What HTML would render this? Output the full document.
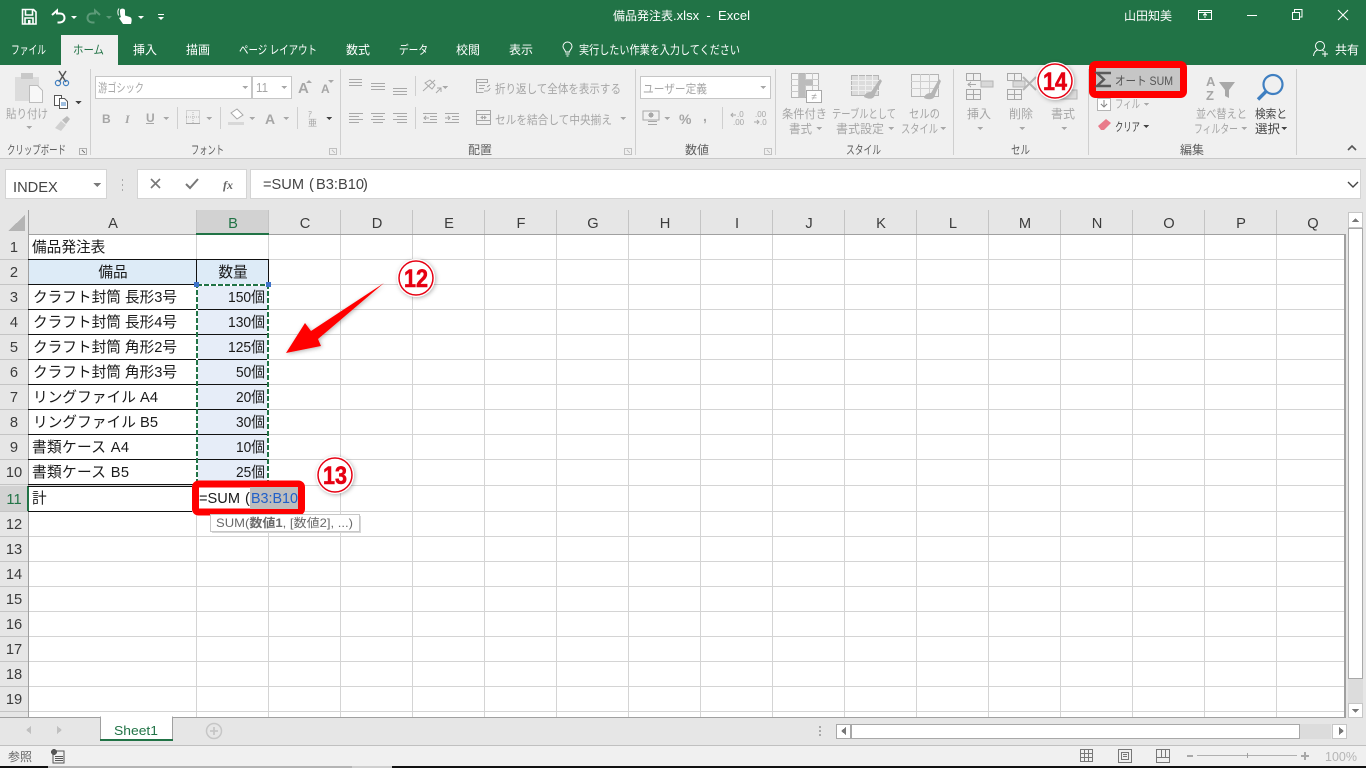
<!DOCTYPE html>
<html lang="ja"><head><meta charset="utf-8"><title>備品発注表.xlsx - Excel</title>
<style>
html,body{margin:0;padding:0;background:#f0f0f0;overflow:hidden;width:1366px;height:768px}
svg{display:block}
text{font-family:"Liberation Sans","Noto Sans CJK JP",sans-serif;font-size:12px;white-space:pre}
.w{fill:#fff}.d{fill:#a6a6a6}.l{fill:#5e5e5e}.k{fill:#444}
.c{font-size:14.67px;fill:#1a1a1a}
.h{font-size:14.67px;fill:#3c3c3c;text-anchor:middle}
.r{text-anchor:end}
.m{text-anchor:middle}
.ic{fill:none;stroke:#a8a8a8;stroke-width:1}
.ar{fill:#a8a8a8}
.num{font-size:25px;font-weight:bold;fill:#e60012;stroke:#e60012;stroke-width:.6;text-anchor:middle}
</style></head><body>
<svg width="1366" height="768" viewBox="0 0 1366 768" xmlns="http://www.w3.org/2000/svg" shape-rendering="crispEdges">
<defs><filter id="sh" x="-30%" y="-30%" width="160%" height="160%"><feDropShadow dx="1" dy="1" stdDeviation="2" flood-color="#000" flood-opacity=".3"/></filter></defs>

<!-- backgrounds -->
<rect width="1366" height="768" fill="#e6e6e6"/>
<rect width="1366" height="65" fill="#217346"/>
<rect x="61" y="35" width="57" height="30" fill="#f0f0f0"/>
<rect y="65" width="1366" height="93" fill="#f0f0f0"/>
<rect y="158" width="1366" height="1" fill="#c8c8c8"/>

<!-- quick access -->
<g shape-rendering="auto">
<path d="M22.500 9.500h11l2.500 2.500v12h-13.500z M25.500 10v5h7v-5 M25 24v-6h8v6" fill="none" stroke="#fff" stroke-width="1.600"/>
<rect x="28" y="20" width="2.500" height="3.500" fill="#fff"/>
<path d="M52 15l5-4.500v3h3c3 0 4.500 2 4.500 4.500s-2 4.500-5 4.500h-2" fill="none" stroke="#fff" stroke-width="2"/>
<path d="M71 16h6l-3 3z" fill="#fff"/>
<path d="M100 15l-5-4.500v3h-3c-3 0-4.500 2-4.500 4.500s2 4.500 5 4.500h2" fill="none" stroke="#5c9a78" stroke-width="2"/>
<path d="M106 16h6l-3 3z" fill="#5c9a78"/>
<path d="M120 10.500c0-2.500 5-2.500 5 0v5l5 1.500c2 1 2 3 1 7h-8l-4-6 2-1c-1-2-1-5-1-6.500z" fill="#fff"/>
<path d="M118.500 15.500c-1-3-1-5 .5-7" fill="none" stroke="#fff"/>
<path d="M138 16h6l-3 3z" fill="#fff"/>
<path d="M158 14h6v1h-6z M158 17h6l-3 3z" fill="#fff"/>
</g>

<text x="613" y="20" class="w" textLength="60" lengthAdjust="spacingAndGlyphs">備品発注表</text>
<text x="673" y="20" class="w" textLength="77" lengthAdjust="spacingAndGlyphs" style="font-size:13px">.xlsx  -  Excel</text>
<text x="1124" y="20" class="w" textLength="48" lengthAdjust="spacingAndGlyphs">山田知美</text>

<!-- window controls -->
<path d="M1198.500 10.500h13v9h-13z M1198.500 12.500h13" fill="none" stroke="#fff"/>
<path d="M1205 18v-4 M1203 15.500l2-2 2 2" fill="none" stroke="#fff"/>
<rect x="1247" y="15" width="10" height="1" fill="#fff"/>
<path d="M1292.500 12.500h7v7h-7z M1294.500 12v-2.500h7.500v7.500h-2.500" fill="none" stroke="#fff"/>
<path d="M1338 10l10 10M1348 10l-10 10" stroke="#fff" shape-rendering="auto" fill="none" stroke-width="1.100"/>

<!-- tabs -->
<text x="11" y="54" class="w" textLength="35" lengthAdjust="spacingAndGlyphs">ファイル</text>
<text x="73" y="54" fill="#217346" textLength="31" lengthAdjust="spacingAndGlyphs">ホーム</text>
<text x="133" y="54" class="w" textLength="24" lengthAdjust="spacingAndGlyphs">挿入</text>
<text x="186" y="54" class="w" textLength="24" lengthAdjust="spacingAndGlyphs">描画</text>
<text x="239" y="54" class="w" textLength="78" lengthAdjust="spacingAndGlyphs">ページ レイアウト</text>
<text x="346" y="54" class="w" textLength="24" lengthAdjust="spacingAndGlyphs">数式</text>
<text x="399" y="54" class="w" textLength="29" lengthAdjust="spacingAndGlyphs">データ</text>
<text x="456" y="54" class="w" textLength="24" lengthAdjust="spacingAndGlyphs">校閲</text>
<text x="509" y="54" class="w" textLength="24" lengthAdjust="spacingAndGlyphs">表示</text>
<g shape-rendering="auto" fill="none" stroke="#fff">
<path d="M565.500 52c0-2-2.500-3-2.500-5.500a4.500 4.500 0 0 1 9 0c0 2.500-2.500 3.500-2.500 5.500z M565.500 54h4 M566.500 56h2"/>
<circle cx="1320" cy="46" r="4.500"/><path d="M1313.500 56c.5-4 2.500-5.500 4-6 M1322.500 50.500l1.500.5 M1322 54h6 M1325 51v6"/>
</g>
<text x="579" y="54" class="w" textLength="161" lengthAdjust="spacingAndGlyphs">実行したい作業を入力してください</text>
<text x="1335" y="54" class="w" textLength="24" lengthAdjust="spacingAndGlyphs">共有</text>

<!-- ribbon separators -->
<path d="M90.500 69v86M340.500 69v86M635.500 69v86M775.500 69v86M953.500 69v86M1088.500 69v86M1296.500 69v86M415.500 76v20M415.500 107v22M177.500 107v22M220.500 107v22M297.500 107v22M722.500 107v22" stroke="#cfcfcf" fill="none"/>

<!-- clipboard -->
<rect x="15" y="77" width="24" height="24" fill="#dcdcdc"/><rect x="21" y="73" width="12" height="6" fill="#c8c8c8"/>
<path d="M29.500 85.500h8l5 5v12h-13z" fill="#f8f8f8" stroke="#bdbdbd"/>
<text x="6" y="118" class="d" textLength="42" lengthAdjust="spacingAndGlyphs">貼り付け</text>
<path class="ar" d="M26 126h6l-3 3z"/>
<g shape-rendering="auto" fill="none">
<path d="M59 71l7 11M66 71l-7 11" stroke="#555" stroke-width="1.500"/>
<circle cx="58" cy="83" r="2.600" stroke="#3f7fc1" stroke-width="1.200"/><circle cx="66" cy="83" r="2.600" stroke="#3f7fc1" stroke-width="1.200"/>
<path d="M54.500 95.500h7v10h-7z" fill="#fff" stroke="#555"/><path d="M59.500 98.500h5l3 3v7h-8z" fill="#fff" stroke="#555"/><path d="M61 103h5M61 105h5" stroke="#3f7fc1"/>
<path d="M55 128l6-7 5 4-5 6z" fill="#d0d0d0"/><path d="M62 120l5-4 3 3-4 5z" fill="#bcbcbc"/>
</g>
<path fill="#444" d="M75 101h7l-3.500 3z"/>
<text x="7" y="154" class="l" textLength="59" lengthAdjust="spacingAndGlyphs">クリップボード</text>
<path d="M79.500 148.500h7v6h-7z" fill="none" stroke="#b0b0b0"/><path d="M82 150l3 3" stroke="#777" fill="none"/>

<!-- font -->
<rect x="95.500" y="76.500" width="156" height="22" fill="#fff" stroke="#c6c6c6"/>
<rect x="252.500" y="76.500" width="39" height="22" fill="#fff" stroke="#c6c6c6"/>
<text x="98" y="92" class="d" textLength="46" lengthAdjust="spacingAndGlyphs">游ゴシック</text>
<text x="256" y="92" class="d" textLength="12" lengthAdjust="spacingAndGlyphs" style="font-size:13px">11</text>
<path class="ar" d="M242 86h6l-3 3zM281 86h6l-3 3z"/>
<g shape-rendering="auto">
<text x="298" y="93" class="d" style="font-size:15px;font-weight:bold">A</text><path class="ar" d="M306 83l3-3 3 3z"/>
<text x="321" y="93" class="d" style="font-size:12px;font-weight:bold">A</text><path class="ar" d="M328 80h6l-3 3z"/>
<text x="102" y="123" class="d" style="font-size:12px;font-weight:bold">B</text>
<text x="125" y="123" class="d" style="font-size:12px;font-style:italic;font-family:'Liberation Serif',serif;font-weight:bold">I</text>
<text x="146" y="122" class="d" style="font-size:12px;font-weight:bold">U</text>
<rect x="146" y="123" width="8" height="1" fill="#a6a6a6"/>
<text x="265" y="124" class="d" style="font-size:14px;font-weight:bold">A</text>
<text x="308" y="117" class="d" style="font-size:8px">ｱ</text>
<text x="308" y="126" class="d" style="font-size:9px">亜</text>
</g>
<path class="ar" d="M163 117h6l-3 3zM206 117h6l-3 3zM249 117h6l-3 3zM283 117h6l-3 3z"/>
<path fill="#444" d="M326 117h6l-3 3z"/>
<path d="M186.500 110.500h13v13h-13zM186 117h14M193 110v14" stroke="#b5b5b5" stroke-dasharray="1 1" fill="none"/>
<path d="M186 123.500h14" stroke="#a8a8a8" fill="none"/>
<path d="M231 113l6-4 6 6-6 4z" fill="#fff" stroke="#a8a8a8" shape-rendering="auto"/><rect x="228" y="122" width="16" height="3" fill="#d8d8d8"/>
<text x="191" y="154" class="l" textLength="33" lengthAdjust="spacingAndGlyphs">フォント</text>
<path d="M329.500 148.500h7v6h-7zM332 150l3 3" stroke="#c0c0c0" fill="none"/>

<!-- alignment -->
<path class="ic" d="M349 79.500h13M349 82.500h13M349 85.500h13 M371 83.500h14M371 86.500h14M371 89.500h14 M393 88.500h14M393 91.500h14M393 94.500h14 M349 113.500h14M349 116.500h10M349 119.500h14M349 122.500h10 M371 113.500h14M373 116.500h10M371 119.500h14M373 122.500h10 M393 113.500h14M397 116.500h10M393 119.500h14M397 122.500h10 M423 113.500h14M430 116.500h7M430 119.500h7M423 122.500h14M429 118h-5M426 116l-2 2 2 2 M445 113.500h14M452 116.500h7M452 119.500h7M445 122.500h14M445 118h5M448 116l2 2-2 2"/>
<path d="M423 91l12-11 M425 83l5-3 5 5-3 4z M436 93l5-5 M441 92v-4h-4" fill="none" stroke="#a8a8a8" shape-rendering="auto"/>
<path class="ar" d="M442 86h6l-3 3z"/>
<path class="ic" d="M476.500 79.500h11v3h-11z M476.500 82.500v10h7 M479 85.500h6M479 88.500h5 M487 87l3-2M484 91h3c2 0 3-2 3-3"/>
<path class="ic" d="M476.500 110.500h14v14h-14z M476.500 114.500h14 M476.500 120.500h14 M481 117.500h5M484 116l2 1.500-2 1.500 M483 116l-2 1.500 2 1.500"/>
<text x="495" y="93" class="d" textLength="126" lengthAdjust="spacingAndGlyphs">折り返して全体を表示する</text>
<text x="495" y="124" class="d" textLength="117" lengthAdjust="spacingAndGlyphs">セルを結合して中央揃え</text>
<path class="ar" d="M620 117h6l-3 3z"/>
<text x="468" y="154" class="l" textLength="24" lengthAdjust="spacingAndGlyphs">配置</text>
<path d="M624.500 148.500h7v6h-7zM627 150l3 3" stroke="#c0c0c0" fill="none"/>

<!-- number -->
<rect x="640.500" y="76.500" width="130" height="22" fill="#fff" stroke="#c6c6c6"/>
<text x="643" y="93" class="d" textLength="64" lengthAdjust="spacingAndGlyphs">ユーザー定義</text>
<path class="ar" d="M760 86h6l-3 3zM664 117h6l-3 3z"/>
<rect x="643" y="111" width="16" height="9" fill="none" stroke="#a8a8a8"/><circle cx="651" cy="115" r="2.500" fill="#a8a8a8"/>
<path class="ic" d="M648 121.500h9M648 124.500h9"/>
<g shape-rendering="auto">
<text x="679" y="124" class="d" style="font-size:14px;font-weight:bold">%</text>
<text x="703" y="121" class="d" style="font-size:14px;font-weight:bold">,</text>
<text x="737" y="117" class="d" style="font-size:8px">.0</text><text x="733" y="125" class="d" style="font-size:8px">.00</text>
<text x="755" y="117" class="d" style="font-size:8px">.00</text><text x="760" y="125" class="d" style="font-size:8px">.0</text>
<path class="ic" d="M731 115h5M733 113l-2 2 2 2 M754 122h5M757 120l2 2-2 2"/>
</g>
<text x="685" y="154" class="l" textLength="24" lengthAdjust="spacingAndGlyphs">数値</text>
<path d="M764.500 148.500h7v6h-7zM767 150l3 3" stroke="#c0c0c0" fill="none"/>

<!-- styles -->
<rect x="791.500" y="73.500" width="27" height="24" fill="#f5f5f5" stroke="#b5b5b5"/>
<path d="M798.500 73v24M805.500 73v24M812.500 73v24M791 79.500h28M791 85.500h28M791 91.500h28" stroke="#c8c8c8" fill="none"/>
<rect x="799" y="74" width="6" height="24" fill="#bcbcbc"/><rect x="805" y="80" width="8" height="5" fill="#bcbcbc"/>
<rect x="806.500" y="90.500" width="15" height="12" fill="#fff" stroke="#a8a8a8"/><text x="814" y="100" class="d m" style="font-size:10px">≠</text>
<text x="782" y="118" class="d" textLength="45" lengthAdjust="spacingAndGlyphs">条件付き</text>
<text x="789" y="133" class="d" textLength="23" lengthAdjust="spacingAndGlyphs">書式</text>
<path class="ar" d="M816 127h6l-3 3z"/>
<rect x="851.500" y="75.500" width="27" height="20" fill="#dcdcdc" stroke="#b5b5b5"/>
<path d="M851 80.500h28M851 85.500h28M851 90.500h28M858.500 75v20M865.500 75v20M872.500 75v20" stroke="#efefef" fill="none"/>
<path d="M864 97c1-4 4-5 7-5l9-13 2 2-7 13c0 3-3 7-11 3z" fill="#b5b5b5" shape-rendering="auto"/>
<text x="832" y="118" class="d" textLength="64" lengthAdjust="spacingAndGlyphs">テーブルとして</text>
<text x="836" y="133" class="d" textLength="48" lengthAdjust="spacingAndGlyphs">書式設定</text>
<path class="ar" d="M888 127h6l-3 3z"/>
<rect x="911.500" y="74.500" width="27" height="22" fill="#f2f2f2" stroke="#b5b5b5"/>
<path d="M911 81.500h28M911 88.500h28M920.500 74v22M929.500 74v22" stroke="#cfcfcf" fill="none"/>
<path d="M924 98c1-4 4-5 7-5l8-14 2 2-6 14c0 3-4 6-11 3z" fill="#b5b5b5" shape-rendering="auto"/>
<text x="909" y="118" class="d" textLength="31" lengthAdjust="spacingAndGlyphs">セルの</text>
<text x="901" y="133" class="d" textLength="37" lengthAdjust="spacingAndGlyphs">スタイル</text>
<path class="ar" d="M940 127h6l-3 3z"/>
<text x="846" y="154" class="l" textLength="35" lengthAdjust="spacingAndGlyphs">スタイル</text>

<!-- cells -->
<path class="ic" d="M966.500 73.500h14v7h-14zM973.500 73v7 M966.500 89.500h14v10h-14zM973.500 89v10M966 94.500h14 M968 84.500h8M971 82l-3 2.500 3 2.500"/>
<rect x="981" y="81" width="12" height="6" fill="#d8d8d8" stroke="#b5b5b5"/>
<text x="967" y="118" class="d" textLength="24" lengthAdjust="spacingAndGlyphs">挿入</text>
<path class="ar" d="M977 127h6l-3 3z"/>
<path class="ic" d="M1007.500 73.500h14v7h-14zM1014.500 73v7 M1007.500 89.500h14v10h-14zM1014.500 89v10M1007 94.500h14"/>
<rect x="1013" y="81" width="12" height="6" fill="#d8d8d8" stroke="#b5b5b5"/>
<path d="M1023 77l13 13M1036 77l-13 13" stroke="#b5b5b5" stroke-width="2" fill="none" shape-rendering="auto"/>
<text x="1009" y="118" class="d" textLength="24" lengthAdjust="spacingAndGlyphs">削除</text>
<path class="ar" d="M1019 127h6l-3 3z"/>
<rect x="1060" y="90" width="17" height="9" fill="#dcdcdc" stroke="#b5b5b5"/>
<text x="1051" y="118" class="d" textLength="24" lengthAdjust="spacingAndGlyphs">書式</text>
<path class="ar" d="M1061 127h6l-3 3z"/>
<text x="1011" y="154" class="l" textLength="19" lengthAdjust="spacingAndGlyphs">セル</text>

<!-- editing -->
<rect x="1097.500" y="98.500" width="13" height="12" fill="#fff" stroke="#b5b5b5"/>
<path d="M1104 100v7M1101 104l3 3 3-3" stroke="#8a8a8a" fill="none"/>
<text x="1115" y="108" class="d" textLength="25" lengthAdjust="spacingAndGlyphs">フィル</text>
<path class="ar" d="M1144 103h5l-2.500 3z"/>
<path d="M1098 126l8-7 5 4-7 7h-3z" fill="#e97a8a" shape-rendering="auto"/>
<text x="1115" y="131" class="k" textLength="25" lengthAdjust="spacingAndGlyphs">クリア</text>
<path fill="#444" d="M1143 125h6l-3 3z"/>
<g shape-rendering="auto">
<text x="1206" y="86" class="d" style="font-size:13px;font-weight:bold">A</text>
<text x="1206" y="100" class="d" style="font-size:13px;font-weight:bold">Z</text>
<path d="M1219 82h16l-6 8v8l-4-2v-6z" fill="#a8a8a8"/>
<circle cx="1273" cy="84.500" r="9.500" fill="none" stroke="#3f7fc1" stroke-width="2.200"/>
<path d="M1266 91.500l-8 8" stroke="#3f7fc1" stroke-width="3.400" fill="none"/>
</g>
<text x="1196" y="118" class="d" textLength="51" lengthAdjust="spacingAndGlyphs">並べ替えと</text>
<text x="1194" y="133" class="d" textLength="44" lengthAdjust="spacingAndGlyphs">フィルター</text>
<path class="ar" d="M1241 127h6l-3 3z"/>
<text x="1255" y="118" class="k" textLength="32" lengthAdjust="spacingAndGlyphs">検索と</text>
<text x="1255" y="133" class="k" textLength="25" lengthAdjust="spacingAndGlyphs">選択</text>
<path fill="#444" d="M1281 127h6l-3 3z"/>
<text x="1180" y="154" class="l" textLength="24" lengthAdjust="spacingAndGlyphs">編集</text>
<path d="M1348 150l4-4 4 4" fill="none" stroke="#555" stroke-width="1.600" shape-rendering="auto"/>

<!-- formula bar -->
<rect x="5.500" y="169.500" width="101" height="29" fill="#fff" stroke="#d4d4d4"/>
<text x="13" y="192" style="font-size:14.67px;fill:#444">INDEX</text>
<path d="M93 183h8l-4 4z" fill="#7a7a7a"/>
<path d="M122 179h1v2h-1zM122 184h1v2h-1zM122 189h1v2h-1z" fill="#a8a8a8"/>
<rect x="137.500" y="169.500" width="109" height="29" fill="#fff" stroke="#d4d4d4"/>
<rect x="250.500" y="169.500" width="1110" height="29" fill="#fff" stroke="#d4d4d4"/>
<g shape-rendering="auto">
<path d="M151 179l9 9M160 179l-9 9" stroke="#777" stroke-width="1.600" fill="none"/>
<path d="M186 184l4 4 8-9" stroke="#777" stroke-width="2" fill="none"/>
<text x="223" y="189" style="font:italic bold 12px 'Liberation Serif',serif;fill:#666">fx</text>
</g>
<path d="M1348 182l5 5 5-5" fill="none" stroke="#444" stroke-width="1.400" shape-rendering="auto"/>
<text x="263" y="189" style="font-size:14.67px;fill:#444" textLength="41" lengthAdjust="spacingAndGlyphs">=SUM</text>
<text x="309" y="189" style="font-size:14.67px;fill:#444">(</text>
<text x="316" y="189" style="font-size:14.67px;fill:#444" textLength="48" lengthAdjust="spacingAndGlyphs">B3:B10</text>
<text x="363" y="189" style="font-size:14.67px;fill:#444">)</text>

<!-- sheet -->
<rect x="29" y="235" width="1316" height="482" fill="#fff"/>
<rect x="196" y="210" width="72" height="24" fill="#d2d2d2"/>
<rect x="0" y="486" width="28" height="25" fill="#d2d2d2"/>
<path d="M8 231L25 215v16z" fill="#b4b4b4"/>
<path d="M28.500 210v25M196.500 210v25M268.500 210v25M340.500 210v25M412.500 210v25M484.500 210v25M556.500 210v25M628.500 210v25M700.500 210v25M772.500 210v25M844.500 210v25M916.500 210v25M988.500 210v25M1060.500 210v25M1132.500 210v25M1204.500 210v25M1276.500 210v25" stroke="#c4c4c4" fill="none"/>
<path d="M0 259.500h28M0 284.500h28M0 309.500h28M0 334.500h28M0 359.500h28M0 384.500h28M0 409.500h28M0 434.500h28M0 459.500h28M0 484.500h28M0 511.500h28M0 536.500h28M0 561.500h28M0 586.500h28M0 611.500h28M0 636.500h28M0 661.500h28M0 686.500h28M0 711.500h28" stroke="#c4c4c4" fill="none"/>
<!-- gridlines -->
<path d="M196.500 235V717M268.500 235V717M340.500 235V717M412.500 235V717M484.500 235V717M556.500 235V717M628.500 235V717M700.500 235V717M772.500 235V717M844.500 235V717M916.500 235V717M988.500 235V717M1060.500 235V717M1132.500 235V717M1204.500 235V717M1276.500 235V717" stroke="#d4d4d4" fill="none"/>
<path d="M29 259.500H1345M29 284.500H1345M29 309.500H1345M29 334.500H1345M29 359.500H1345M29 384.500H1345M29 409.500H1345M29 434.500H1345M29 459.500H1345M29 485.500H1345M29 511.500H1345M29 536.500H1345M29 561.500H1345M29 586.500H1345M29 611.500H1345M29 636.500H1345M29 661.500H1345M29 686.500H1345M29 711.500H1345" stroke="#d4d4d4" fill="none"/>
<!-- outer frame lines -->
<rect x="28" y="234" width="168" height="1" fill="#a0a0a0"/>
<rect x="269" y="234" width="1076" height="1" fill="#a0a0a0"/>
<rect x="28" y="210" width="1" height="507" fill="#a0a0a0"/>
<rect x="1344" y="234" width="2" height="484" fill="#a0a0a0"/>
<rect x="196" y="233" width="73" height="2" fill="#217346"/>
<rect x="27" y="486" width="2" height="25" fill="#217346"/>

<!-- fills -->
<rect x="29" y="260" width="239" height="24" fill="#ddebf7"/>
<rect x="197" y="285" width="71" height="199" fill="#e6edf8"/>
<!-- table borders -->
<path d="M28 259.500H269M28 284.500H269M28 309.500H269M28 334.500H269M28 359.500H269M28 384.500H269M28 409.500H269M28 434.500H269M28 459.500H269M28 484.500H197M28 486.500H192M28 511.500H192M196.500 259v26M268.500 259v26M196.500 309v176" stroke="#111" fill="none"/>
<path d="M196.500 285v200" stroke="#3b6fb8" fill="none"/>
<!-- marching ants -->
<rect x="197" y="285" width="71" height="200" fill="none" stroke="#fff" stroke-width="2"/>
<rect x="197" y="285" width="71" height="200" fill="none" stroke="#217346" stroke-width="2" stroke-dasharray="5 2"/>
<rect x="194" y="282" width="5" height="5" fill="#3d72c9"/>
<rect x="266" y="282" width="5" height="5" fill="#3d72c9"/>

<!-- headers text -->
<g shape-rendering="auto">
<text x="113" y="228" class="h">A</text><text x="233" y="228" class="h" style="fill:#217346">B</text><text x="305" y="228" class="h">C</text><text x="377" y="228" class="h">D</text><text x="449" y="228" class="h">E</text><text x="521" y="228" class="h">F</text><text x="593" y="228" class="h">G</text><text x="665" y="228" class="h">H</text><text x="737" y="228" class="h">I</text><text x="809" y="228" class="h">J</text><text x="881" y="228" class="h">K</text><text x="953" y="228" class="h">L</text><text x="1025" y="228" class="h">M</text><text x="1097" y="228" class="h">N</text><text x="1169" y="228" class="h">O</text><text x="1241" y="228" class="h">P</text><text x="1313" y="228" class="h">Q</text>
<text x="14" y="252" class="h">1</text><text x="14" y="277" class="h">2</text><text x="14" y="302" class="h">3</text><text x="14" y="327" class="h">4</text><text x="14" y="352" class="h">5</text><text x="14" y="377" class="h">6</text><text x="14" y="402" class="h">7</text><text x="14" y="427" class="h">8</text><text x="14" y="452" class="h">9</text><text x="14" y="477" class="h">10</text><text x="14" y="504" class="h" style="fill:#217346">11</text><text x="14" y="529" class="h">12</text><text x="14" y="554" class="h">13</text><text x="14" y="579" class="h">14</text><text x="14" y="604" class="h">15</text><text x="14" y="629" class="h">16</text><text x="14" y="654" class="h">17</text><text x="14" y="679" class="h">18</text><text x="14" y="704" class="h">19</text>

<!-- cells text -->
<text x="32" y="252" class="c">備品発注表</text>
<text x="113" y="277" class="c m">備品</text><text x="233" y="277" class="c m">数量</text>
<text x="33" y="302" class="c" textLength="144" lengthAdjust="spacing">クラフト封筒 長形3号</text>
<text x="33" y="327" class="c" textLength="144" lengthAdjust="spacing">クラフト封筒 長形4号</text>
<text x="33" y="352" class="c" textLength="144" lengthAdjust="spacing">クラフト封筒 角形2号</text>
<text x="33" y="377" class="c" textLength="144" lengthAdjust="spacing">クラフト封筒 角形3号</text>
<text x="33" y="402" class="c" textLength="125" lengthAdjust="spacing">リングファイル A4</text>
<text x="33" y="427" class="c" textLength="125" lengthAdjust="spacing">リングファイル B5</text>
<text x="32" y="452" class="c" textLength="97" lengthAdjust="spacing">書類ケース A4</text>
<text x="32" y="477" class="c" textLength="97" lengthAdjust="spacing">書類ケース B5</text>
<text x="32" y="503" class="c">計</text>
<text x="228" y="302" class="c" textLength="37" lengthAdjust="spacingAndGlyphs">150個</text><text x="228" y="327" class="c" textLength="37" lengthAdjust="spacingAndGlyphs">130個</text><text x="228" y="352" class="c" textLength="37" lengthAdjust="spacingAndGlyphs">125個</text><text x="236" y="377" class="c" textLength="29" lengthAdjust="spacingAndGlyphs">50個</text><text x="236" y="402" class="c" textLength="29" lengthAdjust="spacingAndGlyphs">20個</text><text x="236" y="427" class="c" textLength="29" lengthAdjust="spacingAndGlyphs">30個</text><text x="236" y="452" class="c" textLength="29" lengthAdjust="spacingAndGlyphs">10個</text><text x="236" y="477" class="c" textLength="29" lengthAdjust="spacingAndGlyphs">25個</text>
</g>

<!-- red box 13 -->
<rect x="195.500" y="484" width="106" height="28" rx="3" fill="#fff" stroke="#f00" stroke-width="7" shape-rendering="auto"/>
<rect x="250" y="487" width="48" height="22" fill="#bdbdbd"/>
<g shape-rendering="auto">
<text x="199" y="503" class="c" textLength="41" lengthAdjust="spacingAndGlyphs">=SUM</text>
<text x="245" y="503" class="c">(</text>
<text x="251" y="503" style="font-size:14.67px;fill:#1f5fc9" textLength="47" lengthAdjust="spacingAndGlyphs">B3:B10</text>
</g>
<!-- tooltip -->
<rect x="212" y="516" width="149" height="17" fill="#d8d8d8"/>
<rect x="210.500" y="514.500" width="149" height="17" fill="#fff" stroke="#c8c8c8"/>
<text x="216" y="527" style="fill:#6a6a6a" textLength="137" lengthAdjust="spacingAndGlyphs">SUM(<tspan font-weight="bold">数値1</tspan>, [数値2], ...)</text>

<!-- arrow -->
<polygon points="286,353 305,323 311,331 384,283 318,339 321,346" fill="#f00" filter="url(#sh)" shape-rendering="auto"/>

<!-- circled numbers -->
<g shape-rendering="auto">
<g filter="url(#sh)"><circle cx="416" cy="278" r="19" fill="#fff"/></g>
<circle cx="416" cy="278" r="17" fill="#fff" stroke="#e60012" stroke-width="1.500"/>
<text x="416" y="287" class="num" textLength="24" lengthAdjust="spacingAndGlyphs">12</text>
<g filter="url(#sh)"><circle cx="335" cy="475" r="19" fill="#fff"/></g>
<circle cx="335" cy="475" r="17" fill="#fff" stroke="#e60012" stroke-width="1.500"/>
<text x="335" y="484" class="num" textLength="24" lengthAdjust="spacingAndGlyphs">13</text>
<g filter="url(#sh)"><circle cx="1055" cy="81" r="19" fill="#fff"/></g>
<circle cx="1055" cy="81" r="17" fill="#fff" stroke="#e60012" stroke-width="1.500"/>
<text x="1055" y="90" class="num" textLength="24" lengthAdjust="spacingAndGlyphs">14</text>
</g>

<!-- red box 14 -->
<rect x="1092.500" y="64.500" width="91" height="30" rx="3" fill="#c6c6c6" stroke="#f00" stroke-width="7" shape-rendering="auto"/>
<path d="M1111 73h-14l7 6.500-7 6.500h14" fill="none" stroke="#5a5a5a" stroke-width="2.400" shape-rendering="auto"/>
<text x="1115" y="85" style="fill:#555" textLength="58" lengthAdjust="spacingAndGlyphs">オート SUM</text>

<!-- right scrollbar -->
<rect x="1346" y="210" width="20" height="508" fill="#e6e6e6"/>
<rect x="1348" y="228" width="15" height="475" fill="#dcdcdc"/>
<rect x="1348.500" y="212.500" width="14" height="15" fill="#fff" stroke="#c6c6c6"/>
<rect x="1348.500" y="228.500" width="14" height="450" fill="#fff" stroke="#a8a8a8"/>
<rect x="1348.500" y="703.500" width="14" height="14" fill="#fff" stroke="#c6c6c6"/>
<path d="M1352 222l3.500-4 3.500 4zM1352 709h7l-3.500 4z" fill="#777"/>

<!-- sheet tab bar -->
<rect y="717" width="1345" height="1" fill="#a0a0a0"/>
<rect x="100.500" y="717" width="72" height="23" fill="#fff" stroke="#a0a0a0"/>
<rect x="101" y="716" width="71" height="3" fill="#fff"/>
<rect x="100" y="739" width="73" height="2" fill="#217346"/>
<text x="114" y="735" style="font-size:13px;fill:#217346" textLength="44" lengthAdjust="spacingAndGlyphs">Sheet1</text>
<path d="M31 726v8l-5-4zM57 726v8l5-4z" fill="#c0c0c0"/>
<g shape-rendering="auto"><circle cx="214" cy="731" r="7.500" fill="none" stroke="#c6c6c6" stroke-width="1.500"/><path d="M210 731h8M214 727v8" stroke="#c6c6c6" stroke-width="1.800"/></g>
<path d="M819 726h2v2h-2zM819 730h2v2h-2zM819 734h2v2h-2z" fill="#a8a8a8"/>
<rect x="836.500" y="724.500" width="14" height="14" fill="#fff" stroke="#a8a8a8"/>
<rect x="851" y="724" width="449" height="15" fill="#fff"/>
<path d="M851.500 724v15M851 724.500h449M851 738.500h449M1299.500 724v15" stroke="#a8a8a8" fill="none"/>
<rect x="1300" y="724" width="31" height="15" fill="#dcdcdc"/>
<rect x="1332.500" y="724.500" width="14" height="14" fill="#fff" stroke="#c6c6c6"/>
<path d="M846 727v8l-5-4zM1339 727v8l5-4z" fill="#777"/>

<!-- status bar -->
<rect y="745" width="1366" height="1" fill="#c0c0c0"/>
<rect y="746" width="1366" height="20" fill="#f0f0f0"/>
<text x="8" y="761" style="fill:#666" textLength="24" lengthAdjust="spacingAndGlyphs">参照</text>
<g fill="#555"><rect x="53" y="751" width="11" height="12" fill="none" stroke="#555"/><circle cx="54" cy="752" r="3"/><path d="M55 756h8v1h-8zM55 758h8v1h-8zM55 760h8v1h-8z"/></g>
<path d="M1080.500 749.500h12v12h-12zM1084.500 749v12M1088.500 749v12M1080 753.500h12M1080 757.500h12" fill="none" stroke="#777"/>
<path d="M1118.500 749.500h13v13h-13zM1121.500 752.500h7v7h-7zM1123 754.500h4M1123 756.500h4" fill="none" stroke="#777"/>
<path d="M1156.500 749.500h13v13h-13zM1161.500 749v8M1156 757.500h13M1165.500 749v8" fill="none" stroke="#777"/>
<path d="M1187 755h6v2h-6zM1301 755h8v2h-8zM1304 752h2v8h-2z" fill="#a8a8a8"/>
<rect x="1197" y="755" width="100" height="1" fill="#b0b0b0"/><rect x="1247" y="753" width="1" height="5" fill="#a0a0a0"/>
<text x="1325" y="761" style="font-size:12.500px;fill:#b5b5b5">100%</text>

<!-- bottom edge -->
<rect y="766" width="1366" height="2" fill="#111"/>
<rect x="48" y="766" width="304" height="2" fill="#b4b4b4"/>
<rect x="352" y="766" width="40" height="2" fill="#cfcfcf"/>
</svg>
</body></html>
